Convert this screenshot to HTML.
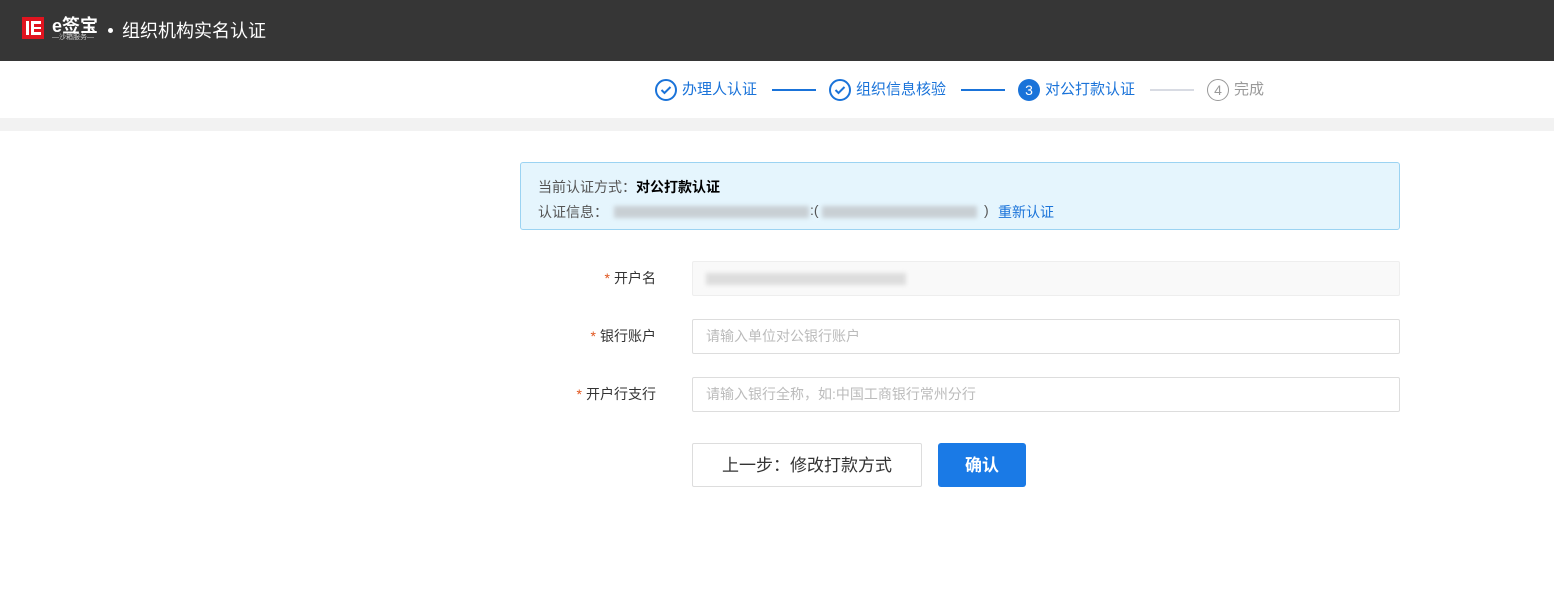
<!DOCTYPE html>
<html><head><meta charset="utf-8"><style>
*{margin:0;padding:0;box-sizing:border-box}
body{width:1554px;height:592px;background:#fff;font-family:"Liberation Sans","Noto Sans CJK SC",sans-serif;font-size:14px;color:#333;position:relative;overflow:hidden}
.hd{position:absolute;left:0;top:0;width:1554px;height:61px;background:#363636}
.abs{position:absolute}
.step{position:absolute;top:79px;height:22px;line-height:22px;font-size:15px;color:#1a73d9}
.ic{position:absolute;top:79px;width:22px;height:22px;border-radius:50%}
.line{position:absolute;top:89px;height:2px}
.gray{position:absolute;left:0;top:118px;width:1554px;height:13px;background:#f2f2f2}
.lbl{position:absolute;width:120px;text-align:right;font-size:14px;color:#333}
.lbl b{color:#e0541c;font-weight:normal;margin-right:4px}
.inp{position:absolute;left:692px;width:708px;height:35px;border:1px solid #ddd;border-radius:2px;padding-left:13px;line-height:33px;color:#bbb;font-size:14px}
.blur{position:absolute;height:12px;background:#c8cfd4;filter:blur(2px)}
</style></head><body>
<div class="hd">
 <div class="abs" style="left:22px;top:17px;width:22px;height:22px;background:#e0141f"></div>
 <div class="abs" style="left:26px;top:21px;width:3px;height:14px;background:#fff"></div>
 <div class="abs" style="left:31px;top:21px;width:10px;height:14px;border:3px solid #fff;border-right:none"></div>
 <div class="abs" style="left:33px;top:27px;width:8px;height:2px;background:#fff"></div>
 <div class="abs" style="left:52px;top:12px;color:#fff;font-size:18px;font-weight:bold">e签宝</div>
 <div class="abs" style="left:52px;top:32px;color:#ccc;font-size:7px">—沙箱服务—</div>
 <div class="abs" style="left:108px;top:28px;width:5px;height:5px;border-radius:50%;background:#fff"></div>
 <div class="abs" style="left:122px;top:17px;color:#fff;font-size:18px">组织机构实名认证</div>
</div>
<div class="ic" style="left:655px;border:2px solid #1a73d9"><svg width="18" height="18" viewBox="0 0 18 18"><path d="M4.5 9l3 3 6-6" stroke="#1a73d9" stroke-width="2" fill="none"/></svg></div>
<div class="step" style="left:682px">办理人认证</div>
<div class="line" style="left:772px;width:44px;background:#1a73d9"></div>
<div class="ic" style="left:829px;border:2px solid #1a73d9"><svg width="18" height="18" viewBox="0 0 18 18"><path d="M4.5 9l3 3 6-6" stroke="#1a73d9" stroke-width="2" fill="none"/></svg></div>
<div class="step" style="left:856px">组织信息核验</div>
<div class="line" style="left:961px;width:44px;background:#1a73d9"></div>
<div class="ic" style="left:1018px;background:#1a73d9;color:#fff;text-align:center;line-height:22px;font-size:14px">3</div>
<div class="step" style="left:1045px">对公打款认证</div>
<div class="line" style="left:1150px;width:44px;background:#d8dbe3"></div>
<div class="ic" style="left:1207px;border:1px solid #999;color:#999;text-align:center;line-height:20px;font-size:14px">4</div>
<div class="step" style="left:1234px;color:#999">完成</div>
<div class="gray"></div>
<div class="abs" style="left:520px;top:162px;width:880px;height:68px;background:#e5f5fd;border:1px solid #9bd3f2;border-radius:3px"></div>
<div class="abs" style="left:538px;top:177px;color:#555">当前认证方式：<span style="color:#000;font-weight:bold">对公打款认证</span></div>
<div class="abs" style="left:538px;top:202px;color:#555">认证信息：</div>
<div class="blur" style="left:614px;top:206px;width:195px"></div>
<div class="abs" style="left:810px;top:202px;color:#555">:(</div>
<div class="blur" style="left:822px;top:206px;width:155px"></div>
<div class="abs" style="left:984px;top:202px;color:#555">)</div>
<div class="abs" style="left:998px;top:202px;color:#1a73d9">重新认证</div>
<div class="lbl" style="left:536px;top:268px"><b>*</b>开户名</div>
<div class="inp" style="top:261px;background:#f9f9f9;border-color:#eee"></div>
<div class="blur" style="left:706px;top:273px;width:200px;background:#ddd"></div>
<div class="lbl" style="left:536px;top:326px"><b>*</b>银行账户</div>
<div class="inp" style="top:319px">请输入单位对公银行账户</div>
<div class="lbl" style="left:536px;top:384px"><b>*</b>开户行支行</div>
<div class="inp" style="top:377px">请输入银行全称，如:中国工商银行常州分行</div>
<div class="abs" style="left:692px;top:443px;width:230px;height:44px;border:1px solid #ddd;border-radius:2px;text-align:center;line-height:44px;font-size:17px;color:#333">上一步：修改打款方式</div>
<div class="abs" style="left:938px;top:443px;width:88px;height:44px;background:#1a7ae6;border-radius:3px;text-align:center;line-height:46px;font-size:17px;color:#fff;font-weight:bold">确认</div>
</body></html>
